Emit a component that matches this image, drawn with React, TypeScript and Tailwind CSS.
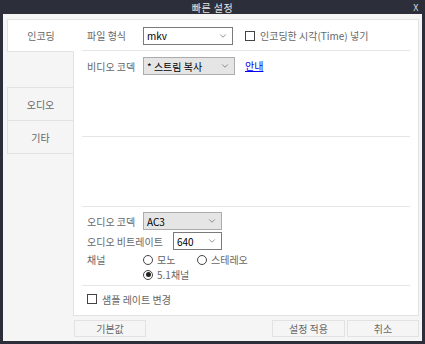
import { ChevronDown } from "lucide-react";

const font = { fontFamily: '"Noto Sans CJK KR", "Noto Sans", sans-serif' };

const Select = ({ value, width, gray }: { value: string; width: string; gray?: boolean }) => (
  <div
    className={`flex h-[18px] items-center justify-between border pl-[3px] pr-[4px] ${width} ${
      gray ? "border-[#acacac] bg-[#e5e5e5]" : "border-[#7a7a7a] bg-white"
    }`}
  >
    <span className="text-[10px] text-black">{value}</span>
    <ChevronDown size={10} strokeWidth={1.5} className="text-[#555]" />
  </div>
);

const Radio = ({ checked, label }: { checked?: boolean; label: string }) => (
  <div className="flex items-center gap-[4px]">
    <span className="flex h-[10px] w-[10px] items-center justify-center rounded-full border border-[#444] bg-white">
      {checked && <span className="h-[5px] w-[5px] rounded-full bg-[#222]" />}
    </span>
    <span>{label}</span>
  </div>
);

const Check = ({ label }: { label: string }) => (
  <div className="flex items-center gap-[5px]">
    <span className="h-[10px] w-[10px] border border-[#444] bg-white" />
    <span>{label}</span>
  </div>
);

const Sep = () => <div className="mx-[8px] h-px bg-[#e6e6e6]" />;

export default function App() {
  return (
    <div style={font} className="flex h-[344px] w-[425px] flex-col bg-[#2c2e39] text-[10px] text-[#666]">
      {/* title bar */}
      <div className="relative flex h-[14px] items-center justify-center text-[10px] tracking-[0.5px] text-[#e8e8e8]">
        빠른 설정
        <span className="absolute right-[6px] top-[1px] text-[9px] text-[#ddd]">X</span>
      </div>

      <div className="mx-[3px] mb-[3px] flex flex-1 flex-col bg-[#f5f5f5] pl-[4px] pr-[3px] pt-[5px]">
        <div className="flex h-[297px]">
          {/* tabs */}
          <div className="flex w-[67px] flex-col">
            <div className="flex h-[33px] items-center justify-center border-y border-l border-[#e2e2e2] bg-white">
              인코딩
            </div>
            <div className="h-[35px] border-r border-[#e2e2e2]" />
            <div className="flex h-[34px] items-center justify-center border border-[#e2e2e2]">오디오</div>
            <div className="flex h-[33px] items-center justify-center border-x border-b border-[#e2e2e2]">기타</div>
            <div className="flex-1 border-r border-[#e2e2e2]" />
          </div>

          {/* panel */}
          <div className="flex flex-1 flex-col border-y border-r border-[#e2e2e2] bg-white">
            <div className="flex h-[30px] items-center pl-[13px] pt-[1px]">
              <span className="w-[56px]">파일 형식</span>
              <Select value="mkv" width="w-[90px]" />
              <div className="ml-[12px]">
                <Check label="인코딩한 시각(Time) 넣기" />
              </div>
            </div>
            <Sep />
            <div className="flex h-[24px] items-end pl-[13px]">
              <span className="mb-[1px] w-[56px]">비디오 코덱</span>
              <Select value="* 스트림 복사" width="w-[92px]" gray />
              <span className="mb-[2px] ml-[10px] text-[#0000ee] underline">안내</span>
            </div>
            <div className="h-[61px]" />
            <Sep />
            <div className="h-[69px]" />
            <Sep />
            <div className="flex h-[23px] items-end pl-[13px]">
              <span className="mb-[1px] w-[56px]">오디오 코덱</span>
              <Select value="AC3" width="w-[79px]" gray />
            </div>
            <div className="flex h-[20px] items-end pl-[13px]">
              <span className="mb-[1px] w-[86px]">오디오 비트레이트</span>
              <Select value="640" width="w-[49px]" />
            </div>
            <div className="flex h-[17px] items-end pl-[13px]">
              <span className="w-[56px]">채널</span>
              <div className="w-[54px]">
                <Radio label="모노" />
              </div>
              <Radio label="스테레오" />
            </div>
            <div className="flex h-[15px] items-end pl-[69px]">
              <Radio checked label="5.1채널" />
            </div>
            <div className="h-[3px]" />
            <Sep />
            <div className="flex h-[26px] items-center pl-[13px]">
              <Check label="샘플 레이트 변경" />
            </div>
          </div>
        </div>

        {/* buttons */}
        <div className="mt-[4px] flex h-[17px] pl-[67px]">
          <button className="w-[72px] border border-[#e2e2e2] bg-[#f5f5f5] text-[10px] text-[#666]">기본값</button>
          <div className="flex-1" />
          <button className="w-[73px] border border-[#e2e2e2] bg-[#f5f5f5] text-[10px] text-[#666]">설정 적용</button>
          <button className="ml-[2px] w-[72px] border border-[#e2e2e2] bg-[#f5f5f5] text-[10px] text-[#666]">취소</button>
        </div>
      </div>
    </div>
  );
}
